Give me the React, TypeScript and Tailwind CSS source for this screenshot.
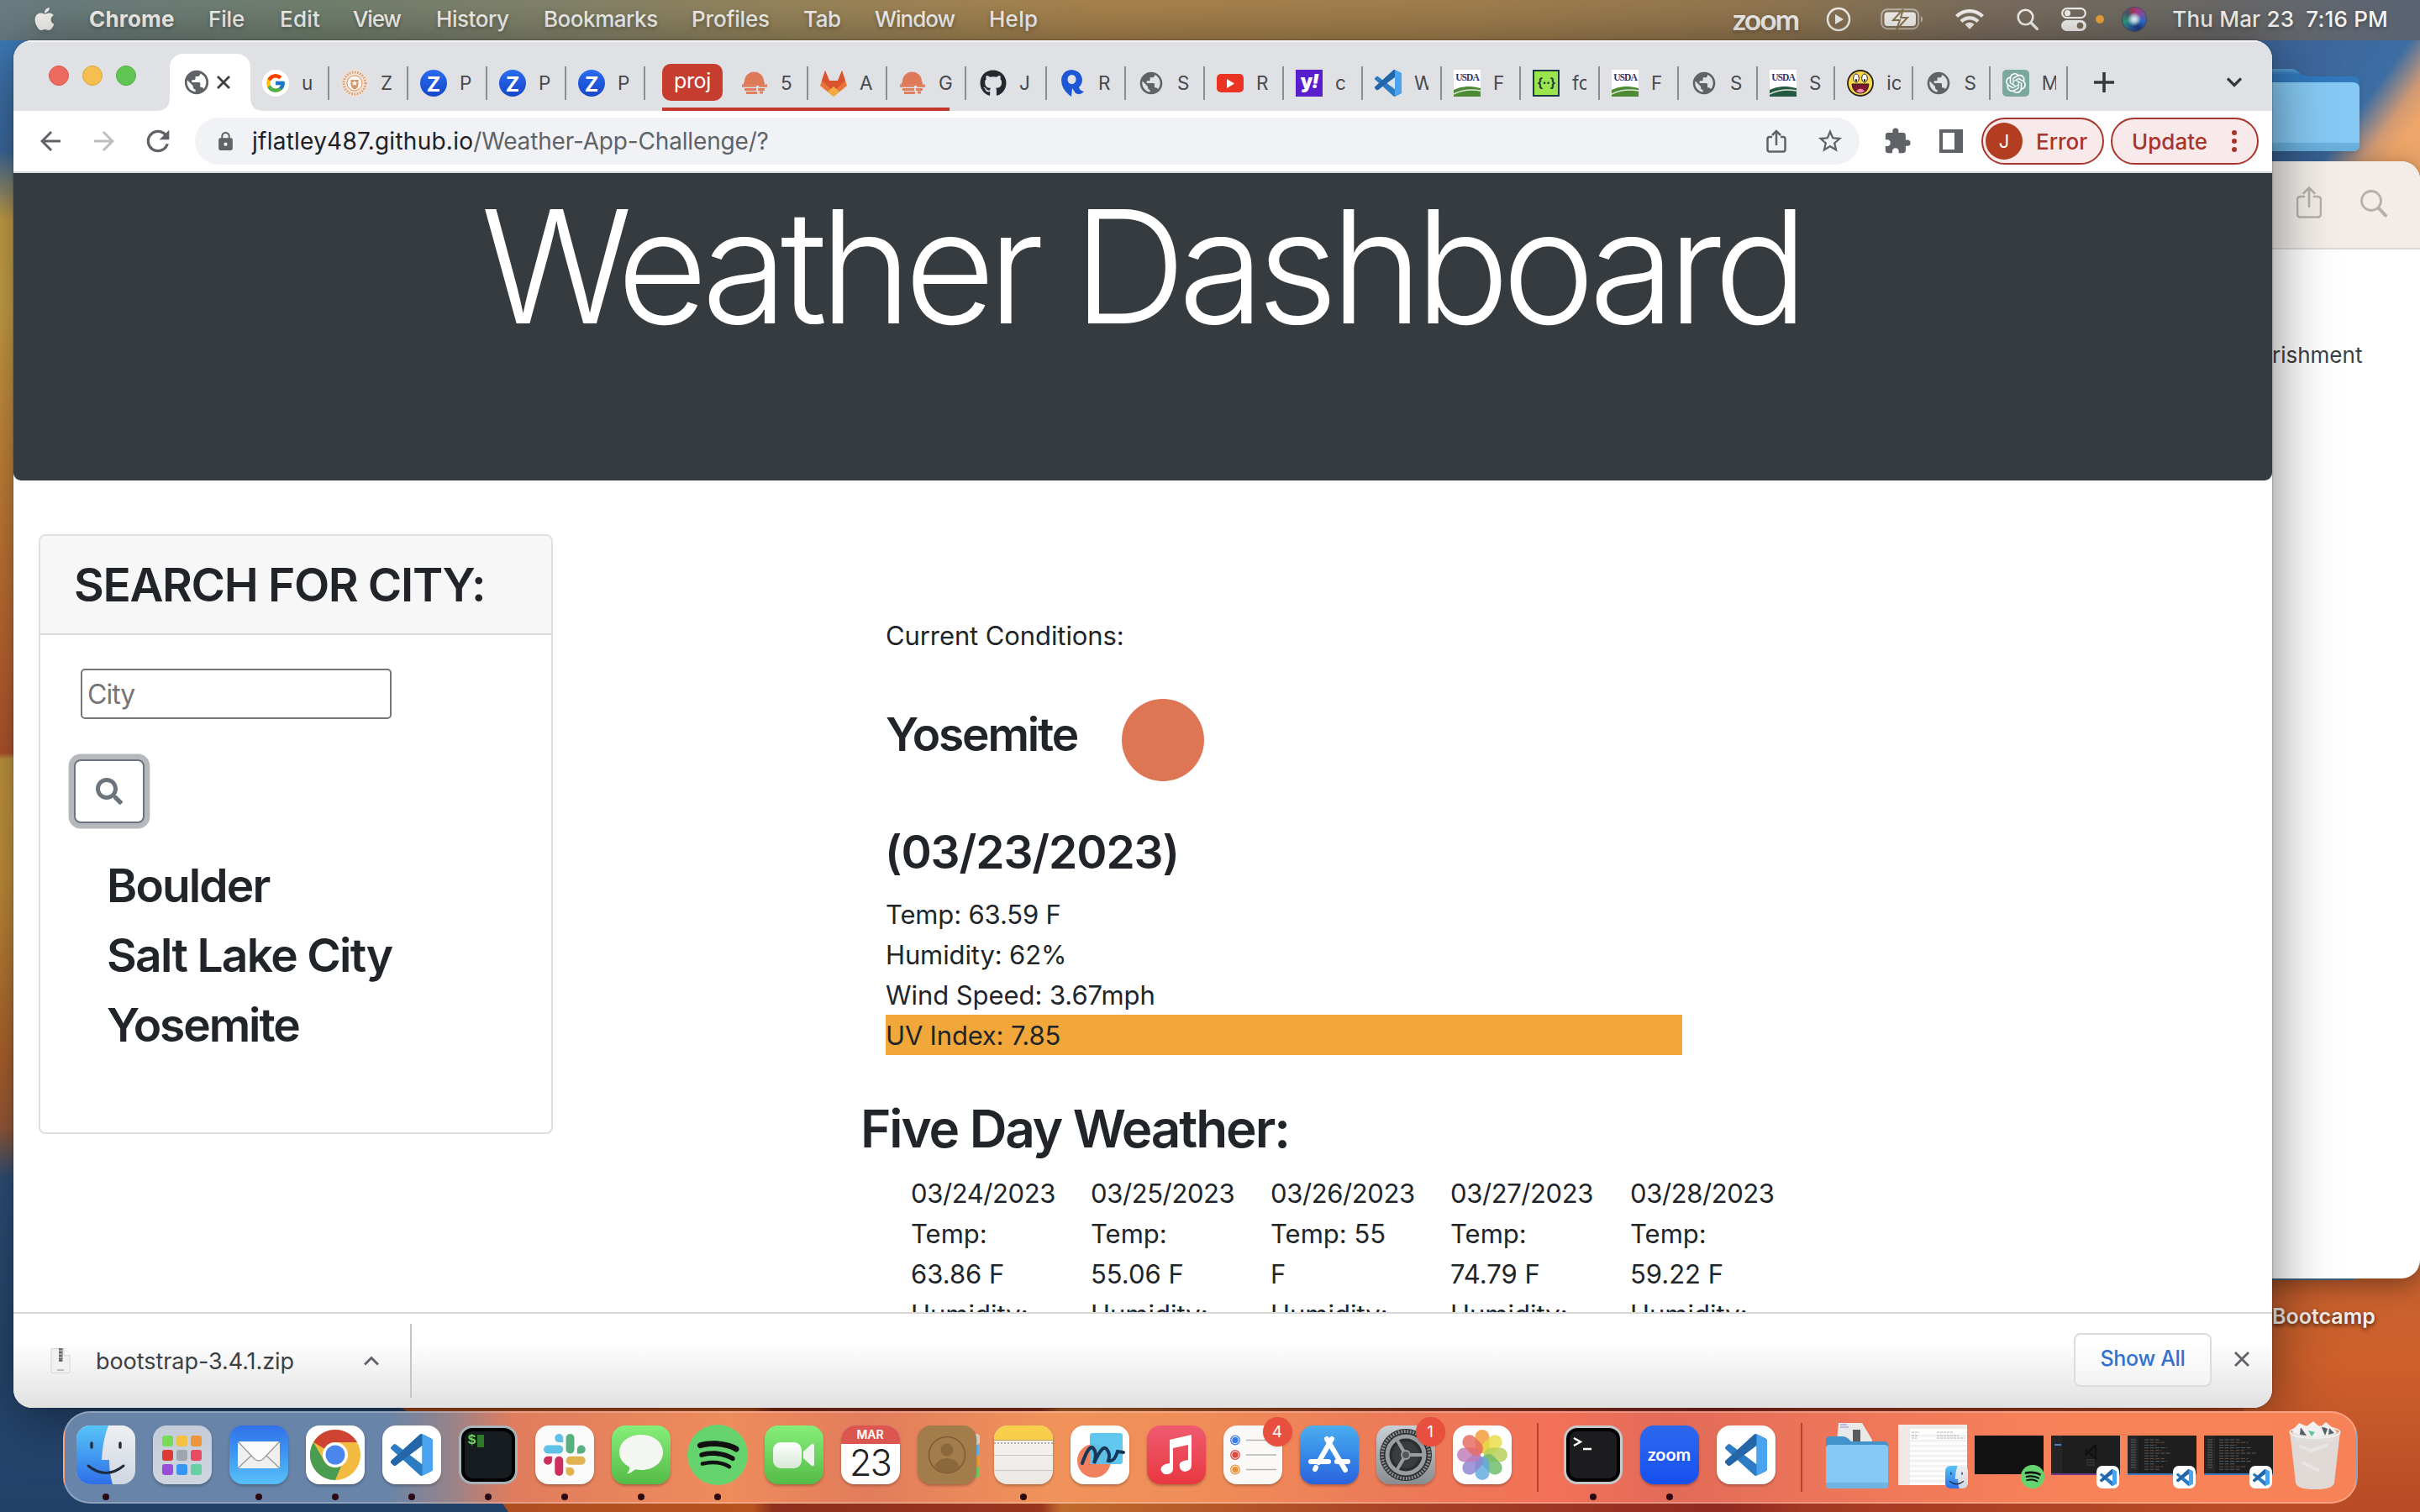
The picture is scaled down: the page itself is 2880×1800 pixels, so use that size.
import type { ReactNode } from "react";
import { FcGoogle } from "react-icons/fc";
import { FaApple, FaGithub, FaSearch, FaSpotify } from "react-icons/fa";
import { MdArrowBack, MdArrowForward, MdExtension, MdLock, MdPublic, MdRefresh, MdStarBorder } from "react-icons/md";

const VSCODE =
  "M23.15 2.587L18.21.21a1.494 1.494 0 0 0-1.705.29l-9.46 8.63-4.12-3.128a.999.999 0 0 0-1.276.057L.327 7.261A1 1 0 0 0 .326 8.74L3.899 12 .326 15.26a1 1 0 0 0 .001 1.479L1.65 17.94a.999.999 0 0 0 1.276.057l4.12-3.128 9.46 8.63a1.492 1.492 0 0 0 1.704.29l4.942-2.377A1.5 1.5 0 0 0 24 20.06V3.939a1.5 1.5 0 0 0-.85-1.352zm-5.146 14.861L10.826 12l7.178-5.448v10.896z";
const OPENAI =
  "M22.2819 9.8211a5.9847 5.9847 0 0 0-.5157-4.9108 6.0462 6.0462 0 0 0-6.5098-2.9A6.0651 6.0651 0 0 0 4.9807 4.1818a5.9847 5.9847 0 0 0-3.9977 2.9 6.0462 6.0462 0 0 0 .7427 7.0966 5.98 5.98 0 0 0 .511 4.9107 6.051 6.051 0 0 0 6.5146 2.9001A5.9847 5.9847 0 0 0 13.2599 24a6.0557 6.0557 0 0 0 5.7718-4.2058 5.9894 5.9894 0 0 0 3.9977-2.9001 6.0557 6.0557 0 0 0-.7475-7.0729zm-9.022 12.6081a4.4755 4.4755 0 0 1-2.8764-1.0408l.1419-.0804 4.7783-2.7582a.7948.7948 0 0 0 .3927-.6813v-6.7369l2.02 1.1686a.071.071 0 0 1 .038.052v5.5826a4.504 4.504 0 0 1-4.4945 4.4944zm-9.6607-4.1254a4.4708 4.4708 0 0 1-.5346-3.0137l.142.0852 4.783 2.7582a.7712.7712 0 0 0 .7806 0l5.8428-3.3685v2.3324a.0804.0804 0 0 1-.0332.0615L9.74 19.9502a4.4992 4.4992 0 0 1-6.1408-1.6464zM2.3408 7.8956a4.485 4.485 0 0 1 2.3655-1.9728V11.6a.7664.7664 0 0 0 .3879.6765l5.8144 3.3543-2.0201 1.1685a.0757.0757 0 0 1-.071 0l-4.8303-2.7865A4.504 4.504 0 0 1 2.3408 7.872zm16.5963 3.8558L13.1038 8.364 15.1192 7.2a.0757.0757 0 0 1 .071 0l4.8303 2.7913a4.4944 4.4944 0 0 1-.6765 8.1042v-5.6772a.79.79 0 0 0-.407-.667zm2.0107-3.0231l-.142-.0852-4.7735-2.7818a.7759.7759 0 0 0-.7854 0L9.409 9.2297V6.8974a.0662.0662 0 0 1 .0284-.0615l4.8303-2.7866a4.4992 4.4992 0 0 1 6.6802 4.66zM8.3065 12.863l-2.02-1.1638a.0804.0804 0 0 1-.038-.0567V6.0742a4.4992 4.4992 0 0 1 7.3757-3.4537l-.142.0805L8.704 5.459a.7948.7948 0 0 0-.3927.6813zm1.0976-2.3654l2.602-1.4998 2.6069 1.4998v2.9994l-2.5974 1.4997-2.6067-1.4997Z";

/* ---------- shared logos ---------- */

function CodeLogo({ className = "" }: { className?: string }) {
  return (
    <svg viewBox="0 0 24 24" className={className}>
      <path d={VSCODE} fill="#2c7cc4" />
      <path d="M3.900 12 .33 15.26a1 1 0 0 0 0 1.480l1.320 1.200a1 1 0 0 0 1.280.06L18 6.550V.15a1.500 1.500 0 0 0-1.500.350L7.050 9.130z" fill="#2566a8" />
      <path d="M18 .12 23.15 2.59A1.5 1.5 0 0 1 24 3.94v16.12a1.5 1.5 0 0 1-.85 1.35L18 23.9z" fill="#4aa3ee" />
    </svg>
  );
}

function FinderFace({ className = "" }: { className?: string }) {
  return (
    <svg viewBox="0 0 70 70" className={className}>
      <defs>
        <linearGradient id="fl" x1="0" y1="0" x2="0" y2="1">
          <stop offset="0" stopColor="#57c5f7" />
          <stop offset="1" stopColor="#2f6fe8" />
        </linearGradient>
        <linearGradient id="fr" x1="0" y1="0" x2="0" y2="1">
          <stop offset="0" stopColor="#eeeff2" />
          <stop offset="1" stopColor="#cfd7e2" />
        </linearGradient>
        <clipPath id="fc">
          <rect width="70" height="70" rx="16" />
        </clipPath>
      </defs>
      <g clipPath="url(#fc)">
        <rect width="70" height="70" fill="url(#fr)" />
        <path d="M0 0h38q-7 18-8 41h9q0 16 4 29H0z" fill="url(#fl)" />
      </g>
      <path d="M18 21v5M52 21v5" stroke="#1d2b3d" strokeWidth="3.4" strokeLinecap="round" />
      <path d="M14 48q21 17 42 0" fill="none" stroke="#1d2b3d" strokeWidth="3" strokeLinecap="round" />
    </svg>
  );
}

function Zoom({ className = "" }: { className?: string }) {
  return <span className={`font-['Lato'] leading-none ${className}`}>zoom</span>;
}

function Folder({ className = "" }: { className?: string }) {
  return (
    <svg viewBox="0 0 74 62" className={className} preserveAspectRatio="none">
      <path d="M0 5q0-5 5-5h15q4 0 7 3l3 3h39q5 0 5 5v20H0z" fill="#4292cb" />
      <path d="M0 14q0-4 4-4h66q4 0 4 4v43q0 5-5 5H5q-5 0-5-5z" fill="#86c9f4" />
      <path d="M0 55h74v2q0 5-5 5H5q-5 0-5-5z" fill="#6db4e2" />
    </svg>
  );
}

/* ---------- tab favicons ---------- */

const Globe = () => <MdPublic className="size-[34px] text-[#5f6368]" />;

const ZBadge = () => (
  <span className="flex size-8 items-center justify-center rounded-full bg-gradient-to-b from-[#2a6cf0] to-[#1746c8] font-['Lato'] text-[25px] leading-none font-black text-white">
    Z
  </span>
);

const Sunrise = () => (
  <svg viewBox="0 0 32 32" className="size-8">
    <path d="M3 19q-1-3 1-5a11.500 11.500 0 0 1 23 0q2 2 0 5z" fill="#df7a59" />
    <path d="M1 19.200h17M21 19.200h10M4 23.500h14M20 23.500h8M6 27.500h13M22 27h4" stroke="#df7f5f" strokeWidth="3.200" />
  </svg>
);

const Usda = ({ tone }: { tone: string }) => (
  <span className="flex h-8 w-8 flex-col justify-between overflow-hidden bg-white">
    <span className="text-center font-['Liberation_Serif'] text-[11.500px] leading-[19px] font-bold tracking-[-0.08em] text-[#2a3468]">USDA</span>
    <svg viewBox="0 0 32 12" className="h-3 w-8">
      <path d="M0 4Q14-3 32 2v10H0z" fill={tone} />
      <path d="M0 9Q14 2 32 5" stroke="#dfe9d8" strokeWidth="1.500" fill="none" />
    </svg>
  </span>
);

const Seal = () => (
  <svg viewBox="0 0 32 32" className="size-8">
    <circle cx="16" cy="16" r="16" fill="#f3e2d3" />
    <circle cx="16" cy="16" r="13" fill="none" stroke="#d4a07a" strokeWidth="3" strokeDasharray="1.600 1.600" />
    <circle cx="16" cy="16" r="9" fill="#fbf5ee" stroke="#cf9467" strokeWidth="1" />
    <path d="M11.500 12h9v5q0 5-4.500 6.500-4.500-1.500-4.500-6.500z" fill="#cf9a70" />
    <path d="m16 12.500 1 2.500h2.500l-2 1.500.8 2.500-2.300-1.500-2.300 1.500.8-2.500-2-1.500H15z" fill="#fff" />
  </svg>
);

const Gitlab = () => (
  <svg viewBox="0 0 32 32" className="size-8">
    <path d="M6 1 11 13h10l5-12 6 18-16 13L0 19z" fill="#e9743a" />
    <path d="M6 1 11 13h10l5-12 4 12-14 13L2 13z" fill="#d9532f" />
    <path d="m16 32-7-6 7-6 7 6z" fill="#f3aa40" />
  </svg>
);

const BlueR = () => (
  <svg viewBox="0 0 32 32" className="size-8">
    <path d="M15 32Q3 24 3 12 4 1 15 0q12 1 13 12 0 5-4 9 1 4 6 5-4 5-10 2l-4-6z" fill="#1d57d6" />
    <ellipse cx="15.500" cy="11.500" rx="5" ry="5.500" fill="#dfe1e5" />
  </svg>
);

const Awesome = () => (
  <svg viewBox="0 0 32 32" className="size-8">
    <circle cx="16" cy="16" r="15" fill="#f8d74c" stroke="#29241a" strokeWidth="1.800" />
    <ellipse cx="11" cy="10" rx="3.300" ry="5" fill="#fff" stroke="#29241a" />
    <ellipse cx="21" cy="10" rx="3.300" ry="5" fill="#fff" stroke="#29241a" />
    <path d="M10 12.500h2M20 12.500h2" stroke="#111" strokeWidth="2.500" />
    <path d="M6 17h20q-1 11-10 11T6 17z" fill="#7d1730" stroke="#29241a" />
    <path d="M11 25.500q5-6 10 0-5 4-10 0z" fill="#f08aa6" />
  </svg>
);

const YouTube = () => (
  <span className="flex h-[22px] w-8 items-center justify-center rounded-[5px] bg-[#ea3323]">
    <svg viewBox="0 0 10 12" className="h-[11px] w-[9px]">
      <path d="M0 0v12l10-6z" fill="#fff" />
    </svg>
  </span>
);

const favicons: Record<string, ReactNode> = {
  google: (
    <span className="flex size-8 items-center justify-center rounded-full bg-white">
      <FcGoogle className="size-[26px]" />
    </span>
  ),
  seal: <Seal />,
  z: <ZBadge />,
  sunrise: <Sunrise />,
  gitlab: <Gitlab />,
  github: <FaGithub className="size-8 text-[#24292f]" />,
  r: <BlueR />,
  globe: <Globe />,
  youtube: <YouTube />,
  yahoo: (
    <span className="flex size-8 items-center justify-center bg-[#5a1fcc] pb-1 font-['Inter'] text-[23px] leading-none font-black tracking-[-0.06em] text-white">
      y<i>!</i>
    </span>
  ),
  code: <CodeLogo className="size-8" />,
  usda: <Usda tone="#4d8a34" />,
  usda2: <Usda tone="#245a43" />,
  braces: (
    <span className="flex size-8 items-center justify-center border-2 border-[#1f3644] bg-[#9be54c] pb-0.5 font-['Inter'] text-[15px] leading-none font-bold tracking-[-0.04em] text-[#1f3644]">
      {"{··}"}
    </span>
  ),
  awesome: <Awesome />,
  openai: (
    <span className="flex size-8 items-center justify-center rounded-[5px] bg-[#7ba89d]">
      <svg viewBox="0 0 24 24" className="size-6">
        <path d={OPENAI} fill="#fff" />
      </svg>
    </span>
  ),
};

type TabInfo = { icon: string; label: string };
const pinned: TabInfo[] = [
  { icon: "google", label: "u" },
  { icon: "seal", label: "Z" },
  { icon: "z", label: "P" },
  { icon: "z", label: "P" },
  { icon: "z", label: "P" },
];
const grouped: TabInfo[] = [
  { icon: "sunrise", label: "5" },
  { icon: "gitlab", label: "A" },
  { icon: "sunrise", label: "G" },
];
const loose: TabInfo[] = [
  { icon: "github", label: "J" },
  { icon: "r", label: "R" },
  { icon: "globe", label: "S" },
  { icon: "youtube", label: "R" },
  { icon: "yahoo", label: "c" },
  { icon: "code", label: "W" },
  { icon: "usda", label: "F" },
  { icon: "braces", label: "fo" },
  { icon: "usda", label: "F" },
  { icon: "globe", label: "S" },
];
const tail: TabInfo[] = [
  { icon: "usda2", label: "S" },
  { icon: "awesome", label: "ic" },
  { icon: "globe", label: "S" },
  { icon: "openai", label: "M" },
];

function Tab({ icon, label, narrow = false }: TabInfo & { narrow?: boolean }) {
  return (
    <div className={`flex h-10 items-center border-r-2 border-[#8b8d91] pl-3.5 ${narrow ? "w-[92.250px]" : "w-[94px]"}`}>
      <span className="flex size-8 shrink-0 items-center justify-center">{favicons[icon]}</span>
      <span className="ml-[15px] w-[17px] overflow-hidden text-[22.500px] leading-8 whitespace-nowrap text-[#46494d]">{label}</span>
    </div>
  );
}

/* ---------- wallpaper ---------- */

function Wallpaper() {
  return (
    <svg viewBox="0 0 2880 1800" className="absolute inset-0 h-[1800px] w-[2880px]">
      <defs>
        <linearGradient id="left" x1="0" y1="0" x2="0" y2="1800" gradientUnits="userSpaceOnUse">
          <stop offset="0.027" stopColor="#3f7dbb" />
          <stop offset="0.1" stopColor="#3f6fa6" />
          <stop offset="0.145" stopColor="#d3a94c" />
          <stop offset="0.2" stopColor="#d7ad4e" />
          <stop offset="0.3" stopColor="#d38e3d" />
          <stop offset="0.42" stopColor="#cb7035" />
          <stop offset="0.498" stopColor="#bd592f" />
          <stop offset="0.502" stopColor="#d0a045" />
          <stop offset="0.58" stopColor="#d09a40" />
          <stop offset="0.7" stopColor="#b9692f" />
          <stop offset="0.745" stopColor="#a3603c" />
          <stop offset="0.78" stopColor="#30547f" />
          <stop offset="1" stopColor="#224169" />
        </linearGradient>
        <linearGradient id="right" x1="0" y1="1500" x2="0" y2="1800" gradientUnits="userSpaceOnUse">
          <stop offset="0" stopColor="#c4602f" />
          <stop offset="0.4" stopColor="#cf602b" />
          <stop offset="1" stopColor="#b84a25" />
        </linearGradient>
        <linearGradient id="sky" x1="2700" y1="-50" x2="2930" y2="117" gradientUnits="userSpaceOnUse">
          <stop offset="0.4" stopColor="#3d679c" />
          <stop offset="0.68" stopColor="#3c6da3" />
          <stop offset="0.82" stopColor="#d29a72" />
          <stop offset="0.9" stopColor="#eda569" />
        </linearGradient>
        <linearGradient id="floor" x1="430" y1="0" x2="2880" y2="0" gradientUnits="userSpaceOnUse">
          <stop offset="0" stopColor="#a94d1f" />
          <stop offset="0.19" stopColor="#b8521f" />
          <stop offset="0.2" stopColor="#8c2f1c" />
          <stop offset="0.33" stopColor="#98351f" />
          <stop offset="0.34" stopColor="#bf6a2c" />
          <stop offset="0.5" stopColor="#a84426" />
          <stop offset="0.66" stopColor="#8f2a20" />
          <stop offset="0.7" stopColor="#a33823" />
          <stop offset="0.92" stopColor="#bb4d26" />
        </linearGradient>
      </defs>
      <rect width="2880" height="1800" fill="url(#left)" />
      <rect x="2600" width="280" height="300" fill="url(#sky)" />
      <rect x="2600" y="1500" width="280" height="300" fill="url(#right)" />
      <path d="M450 1660h2220v140H605q-60-90-155-140z" fill="url(#floor)" />
    </svg>
  );
}

/* ---------- menu bar ---------- */

const menus: [string, string][] = [
  ["File", "w-[85px] tracking-[-0.005em]"],
  ["Edit", "w-[87px] tracking-[0.009em]"],
  ["View", "w-[99px] tracking-[-0.045em]"],
  ["History", "w-[128px] tracking-[-0.017em]"],
  ["Bookmarks", "w-[176px] tracking-[-0.018em]"],
  ["Profiles", "w-[133px] tracking-[-0.007em]"],
  ["Tab", "w-[85px] tracking-[-0.016em]"],
  ["Window", "w-[136px] tracking-[-0.040em]"],
  ["Help", "tracking-[0.010em]"],
];

function MenuBar() {
  return (
    <header className="relative flex h-12 items-center bg-[linear-gradient(90deg,#697c81_0%,#72806f_13%,#85846a_24%,#99855a_33%,#a8834d_46%,#a2804e_60%,#94784f_72%,#7b6e5e_82%,#6c6a68_91%,#596373_100%)] pb-[3px] text-[26px] font-medium whitespace-nowrap text-[#f4f3f0] [text-shadow:0_2px_5px_rgba(0,0,0,0.3)]">
      <FaApple className="ml-[38px] h-[31px] w-[30px] drop-shadow-md" />
      <span className="ml-[38px] w-[142px] font-bold tracking-[0.007em]">Chrome</span>
      {menus.map(([name, cls]) => (
        <span key={name} className={cls}>
          {name}
        </span>
      ))}
      <div className="ml-auto flex items-center">
        <Zoom className="mr-[33px] text-[35px] font-bold tracking-[-0.050em]" />
        <svg viewBox="0 0 30 30" className="mr-[35px] size-[30px]">
          <circle cx="15" cy="15" r="13" fill="none" stroke="#f4f3f0" strokeWidth="2.600" />
          <path d="M11 9v12l10-6z" fill="#f4f3f0" />
        </svg>
        <svg viewBox="0 0 52 26" className="mr-[36px] h-[26px] w-[52px]">
          <rect x="1.200" y="1.200" width="44" height="23" rx="7" fill="none" stroke="#f4f3f0" strokeOpacity=".55" strokeWidth="2" />
          <rect x="4.500" y="4.500" width="37.500" height="16.500" rx="4" fill="#f4f3f0" />
          <path d="M48 9q4 4 0 8z" fill="#f4f3f0" fillOpacity=".6" />
          <path d="M27 1 15 14h8l-4 11 13-14h-8z" fill="#f4f3f0" stroke="#8b7755" strokeWidth="2" />
        </svg>
        <svg viewBox="0 0 36 26" className="mr-[38px] h-[26px] w-9">
          <path d="M2.500 9.500a22 22 0 0 1 31 0M8 15.500a14 14 0 0 1 20 0" fill="none" stroke="#f4f3f0" strokeWidth="4.200" />
          <path d="m18 25 5.500-6a8 8 0 0 0-11 0z" fill="#f4f3f0" />
        </svg>
        <svg viewBox="0 0 26 26" className="mr-[27px] size-[26px]">
          <circle cx="10.500" cy="10.500" r="8.800" fill="none" stroke="#f4f3f0" strokeWidth="2.600" />
          <path d="m17 17 7.500 7.500" stroke="#f4f3f0" strokeWidth="3.200" strokeLinecap="round" />
        </svg>
        <svg viewBox="0 0 30 28" className="mr-[11px] h-7 w-[30px]">
          <rect x="1.200" y="1.200" width="27.600" height="11" rx="5.500" fill="none" stroke="#f4f3f0" strokeWidth="2.200" />
          <circle cx="7.500" cy="6.700" r="3.600" fill="#f4f3f0" />
          <rect y="15" width="30" height="13" rx="6.500" fill="#f4f3f0" />
          <circle cx="22.500" cy="21.500" r="3.800" fill="#7c6f60" />
        </svg>
        <span className="mr-[22px] size-2.5 rounded-full bg-[#f2a33c]" />
        <span className="mr-[31px] size-7 rounded-full bg-[radial-gradient(circle_at_50%_50%,#fff_0%,#bfe0f0_16%,transparent_42%),conic-gradient(#b0357a,#8c4fa0,#2f6fd8,#1d3c86,#2a5f9c,#2f9d84,#4a5a6a,#b0355a)] ring-1 ring-[#444c66]" />
        <span className="mr-[38px] tracking-[0.007em] whitespace-pre">Thu Mar 23  7:16 PM</span>
      </div>
    </header>
  );
}

/* ---------- window behind the browser and desktop items ---------- */

function Desktop() {
  return (
    <>
      <svg viewBox="0 0 208 98" className="absolute top-[82px] left-[2600px] h-[98px] w-[208px] drop-shadow-md">
        <defs>
          <linearGradient id="back" x1="0" y1="0" x2="0" y2="1">
            <stop offset="0" stopColor="#5a9fd0" />
            <stop offset="0.18" stopColor="#3079bd" />
          </linearGradient>
        </defs>
        <path d="M0 0h126q6 0 10 4t12 5h52q8 0 8 8v20H0z" fill="url(#back)" />
        <path d="M0 16h200q8 0 8 8v66q0 8-8 8H0z" fill="#86c9f4" />
        <path d="M0 88h208v2q0 8-8 8H0z" fill="#6db4e2" />
      </svg>
      <div className="absolute top-[1500px] left-[2680px] h-6 w-[126px] rounded-b-md bg-[#4a7ea3]" />
      <div className="absolute top-[192px] left-[2400px] flex h-[1330px] w-[480px] flex-col overflow-hidden rounded-[22px] bg-white shadow-[0_6px_30px_rgba(0,0,0,0.4)]">
        <div className="flex h-[105px] items-center justify-end gap-[46px] border-b-2 border-[#dcd8d5] bg-[#f2ede9] pr-[39px] pb-1.5">
          <svg viewBox="0 0 30 38" className="h-[38px] w-[30px]" fill="none" stroke="#b5b0ac" strokeWidth="2.600" strokeLinecap="round">
            <path d="M9 12H5q-4 0-4 4v16q0 4.500 4 4.500h20q4 0 4-4.500V16q0-4-4-4h-4M15 24V2M8.500 8 15 1.500 21.500 8" />
          </svg>
          <svg viewBox="0 0 32 33" className="mt-1 h-[33px] w-8" fill="none" stroke="#b5b0ac" strokeLinecap="round">
            <circle cx="13" cy="13" r="11.500" strokeWidth="2.800" />
            <path d="m22 22 8 8.500" strokeWidth="4" />
          </svg>
        </div>
        <span className="mt-[108px] ml-[304px] text-[26px] leading-9 text-[#3f3f3f]">rishment</span>
      </div>
      <span className="absolute top-[1549px] left-[2704px] text-[25px] leading-9 font-semibold text-[#f7ede8] [text-shadow:0_2px_5px_rgba(0,0,0,0.7)]">Bootcamp</span>
    </>
  );
}

/* ---------- browser ---------- */

function TabStrip() {
  return (
    <div className="flex h-[84px] shrink-0 items-start border-t-2 border-[#f3f3f5] bg-[#dfe1e5]">
      <div className="mt-[28px] ml-[42px] flex gap-4">
        <span className="size-6 rounded-full border border-[#d9564b] bg-[#ed6a5f]" />
        <span className="size-6 rounded-full border border-[#dba53f] bg-[#f5bf4f]" />
        <span className="size-6 rounded-full border border-[#4fae40] bg-[#61c554]" />
      </div>
      <div className="mt-3.5 ml-[24px] flex items-end">
        <svg viewBox="0 0 16 16" className="mt-[52px] size-4">
          <path d="M16 0v16H0Q16 16 16 0z" fill="#fff" />
        </svg>
        <div className="flex h-[68px] w-24 items-center rounded-t-[16px] bg-white pl-[15px]">
          <Globe />
          <svg viewBox="0 0 16 16" className="ml-[7px] size-4">
            <path d="m1 1 14 14M15 1 1 15" stroke="#3c4043" strokeWidth="2.800" />
          </svg>
        </div>
        <svg viewBox="0 0 16 16" className="-mr-4 size-4">
          <path d="M0 0v16h16Q0 16 0 0z" fill="#fff" />
        </svg>
      </div>
      <div className="mt-[29px] flex">
        {pinned.map((t, i) => (
          <Tab key={i} {...t} />
        ))}
      </div>
      <div className="relative mt-[26px] ml-5 flex h-14 w-[342px] shrink-0 items-start border-b-4 border-[#c5372c]">
        <span className="mr-2 flex h-11 w-[72px] shrink-0 items-center justify-center rounded-[10px] bg-[#c63d30] pb-0.5 text-[25px] tracking-[-0.015em] text-white">proj</span>
        <div className="mt-[3px] flex">
          {grouped.map((t, i) => (
            <Tab key={i} {...t} />
          ))}
        </div>
      </div>
      <div className="mt-[29px] ml-[22px] flex">
        {loose.map((t, i) => (
          <Tab key={i} {...t} />
        ))}
        {tail.map((t, i) => (
          <Tab key={i} {...t} narrow />
        ))}
      </div>
      <svg viewBox="0 0 24 24" className="mt-[36px] ml-[31px] size-6">
        <path d="M12 0v24M0 12h24" stroke="#34373b" strokeWidth="3.600" />
      </svg>
      <svg viewBox="0 0 18 12" className="mt-[42px] mr-9 ml-auto h-3 w-[18px]">
        <path d="m1 1.500 8 8 8-8" fill="none" stroke="#34373b" strokeWidth="3.200" />
      </svg>
    </div>
  );
}

function Toolbar() {
  return (
    <div className="flex h-[74px] shrink-0 items-center border-b-2 border-[#d9dbdd] bg-white text-[#5f6368]">
      <MdArrowBack className="ml-[26px] size-9 shrink-0" />
      <MdArrowForward className="ml-7 size-9 shrink-0 text-[#bcbec1]" />
      <MdRefresh className="ml-[26px] size-[40px] shrink-0" />
      <div className="ml-[24px] flex h-14 w-[1981px] items-center rounded-full bg-[#f0f2f5]">
        <MdLock className="ml-[24px] size-[25px]" />
        <span className="ml-[19px] text-[28px] tracking-[0.009em] text-[#202124]">jflatley487.github.io</span>
        <span className="text-[28px] tracking-[-0.0060em]">/Weather-App-Challenge/?</span>
        <svg viewBox="0 0 24 28" className="mr-[35px] ml-auto h-7 w-6" fill="none" stroke="#5f6368" strokeWidth="2.500">
          <path d="M7 9H4q-2.500 0-2.500 2.500v12.500q0 2.500 2.500 2.500h16q2.500 0 2.500-2.500V11.500Q22.500 9 20 9h-3M12 19V2M7 7l5-5 5 5" />
        </svg>
        <MdStarBorder className="mr-[18px] size-[34px]" />
      </div>
      <MdExtension className="ml-[28px] size-[34px]" />
      <span className="ml-[33px] h-7 w-7 border-[4px] border-r-[10px] border-[#5f6368]" />
      <div className="ml-[22px] flex h-14 w-[146px] items-center rounded-full border-[2.500px] border-[#a8352b] bg-[#f8eaea] text-[26px] font-medium text-[#a8352b]">
        <span className="ml-[3px] flex size-11 items-center justify-center rounded-full bg-[#b23d20] text-[22px] font-normal text-white">J</span>
        <span className="ml-[16px]">Error</span>
      </div>
      <div className="ml-2 flex h-14 w-44 items-center rounded-full border-[2.500px] border-[#a8352b] bg-[#f8eaea] text-[26px] font-medium text-[#a8352b]">
        <span className="ml-[23px]">Update</span>
        <span className="ml-[29px] flex flex-col gap-1">
          <i className="size-1.5 rounded-full bg-[#a8352b]" />
          <i className="size-1.5 rounded-full bg-[#a8352b]" />
          <i className="size-1.5 rounded-full bg-[#a8352b]" />
        </span>
      </div>
    </div>
  );
}

const days = [
  { date: "03/24/2023", temp: ["Temp:", "63.86 F"] },
  { date: "03/25/2023", temp: ["Temp:", "55.06 F"] },
  { date: "03/26/2023", temp: ["Temp: 55", "F"] },
  { date: "03/27/2023", temp: ["Temp:", "74.79 F"] },
  { date: "03/28/2023", temp: ["Temp:", "59.22 F"] },
];

function Line({ children, className = "" }: { children: ReactNode; className?: string }) {
  return <p className={`h-12 pt-px text-[31px] leading-[47px] whitespace-nowrap ${className}`}>{children}</p>;
}

function WeatherPage() {
  return (
    <main className="flex h-[1356px] shrink-0 flex-col overflow-hidden bg-white text-[#212529]">
      <div className="h-[366px] shrink-0 rounded-b-[9px] bg-[#363b3f]">
        <h1 className="pl-[556px] text-[187px] leading-[222px] font-light tracking-[-0.0490em] whitespace-nowrap text-white">Weather Dashboard</h1>
      </div>
      <div className="flex">
        <aside className="mt-16 ml-[30px] flex h-[714px] w-[612px] shrink-0 flex-col overflow-hidden rounded-[8px] border-2 border-[#dfdfdf] bg-white font-semibold">
          <h3 className="flex h-[118px] items-center border-b-2 border-[#dadada] bg-[#f7f7f7] pl-10 text-[55px] tracking-[-0.0245em]">SEARCH FOR CITY:</h3>
          <input
            className="mt-10 ml-12 h-[60px] w-[370px] rounded-[5px] border-2 border-[#767676] px-1.5 text-[32px] font-normal tracking-[-0.030em] placeholder:text-[#757575]"
            placeholder="City"
          />
          <button className="mt-[48px] ml-[40px] flex h-[76px] w-[84px] items-center justify-center rounded-[8px] border-2 border-[#6c757d] bg-white shadow-[0_0_0_6.400px_#b5b9bd]">
            <FaSearch className="size-8 text-[#6c757d]" />
          </button>
          <ul className="mt-[33px] ml-[79px] text-[55px] leading-[83.200px]">
            <li className="tracking-[-0.0340em]">Boulder</li>
            <li className="tracking-[-0.0305em]">Salt Lake City</li>
            <li className="tracking-[-0.0380em]">Yosemite</li>
          </ul>
        </aside>
        <section className="ml-[368px] w-[1100px]">
          <div className="ml-7 w-[948px] pt-[160px]">
            <Line className="tracking-[-0.003em]">Current Conditions:</Line>
            <div className="mt-[52px] flex h-[98px] items-center">
              <h3 className="mb-3.5 w-[281px] text-[55px] font-semibold tracking-[-0.0390em]">Yosemite</h3>
              <span className="size-[98px] rounded-full bg-[#de7656]" />
            </div>
            <h3 className="mt-[51px] -ml-px text-[55px] leading-[66px] font-semibold tracking-[-0.0200em]">(03/23/2023)</h3>
            <Line className="mt-[17px] tracking-[-0.005em]">Temp: 63.59 F</Line>
            <Line className="tracking-[-0.004em]">Humidity: 62%</Line>
            <Line className="tracking-[-0.002em]">Wind Speed: 3.67mph</Line>
            <Line className="bg-[#f2a73b] tracking-[-0.006em]">UV Index: 7.85</Line>
          </div>
          <h2 className="mt-[50px] -ml-0.5 text-[62px] leading-[76px] font-semibold tracking-[-0.0340em] whitespace-nowrap">Five Day Weather:</h2>
          <div className="mt-[14px] ml-[58px] flex">
            {days.map((d) => (
              <div key={d.date} className="w-[214px] shrink-0">
                <Line className="tracking-[-0.013em]">{d.date}</Line>
                <Line>{d.temp[0]}</Line>
                <Line>{d.temp[1]}</Line>
                <Line>Humidity:</Line>
              </div>
            ))}
          </div>
        </section>
      </div>
    </main>
  );
}

function DownloadShelf() {
  return (
    <footer className="flex h-[114px] items-center border-t-2 border-[#d8d8d9] bg-gradient-to-b from-white from-30% to-[#e1e1e1]">
      <svg viewBox="0 0 24 30" className="ml-11 h-[30px] w-6">
        <path d="M1 .5h15l7 8V28q0 1.500-1.500 1.500h-19Q1 29.500 1 28z" fill="#f1f1f1" stroke="#d6d6d6" />
        <path d="M16 .5v8h7" fill="#fff" stroke="#d6d6d6" />
        <rect x="10" width="4.500" height="16" fill="#6c6c6c" />
        <path d="M10 3h4M10 7h4M10 11h4" stroke="#ddd" strokeWidth="1" />
        <path d="M8 26h8" stroke="#aaa" strokeWidth="1.500" />
      </svg>
      <span className="ml-[30px] w-[319px] pt-0.5 text-[27px] tracking-[-0.002em] text-[#3c4043]">bootstrap-3.4.1.zip</span>
      <svg viewBox="0 0 18 12" className="-mt-px h-3 w-[18px]">
        <path d="m1 10.500 8-8 8 8" fill="none" stroke="#5f6368" strokeWidth="3" />
      </svg>
      <span className="ml-[37px] h-[88px] w-0.5 bg-[#c6c6c7]" />
      <span className="mb-0.5 ml-auto flex h-16 w-[164px] items-center justify-center rounded-[8px] border-2 border-[#dadce0] bg-white/40 pb-0.5 text-[25px] font-medium tracking-[-0.013em] text-[#3271cf]">
        Show All
      </span>
      <svg viewBox="0 0 18 18" className="mr-[27px] mb-1 ml-[27px] size-[18px]">
        <path d="m1 1 16 16M17 1 1 17" stroke="#5f6368" strokeWidth="2.800" />
      </svg>
    </footer>
  );
}

/* ---------- dock ---------- */

function Tile({ className = "", children }: { className?: string; children?: ReactNode }) {
  return <div className={`relative flex size-[70px] items-center justify-center overflow-hidden rounded-[16px] shadow-[0_2px_3px_rgba(0,0,0,0.25)] ${className}`}>{children}</div>;
}

const padColors = ["bg-[#78dc56]", "bg-[#f5c143]", "bg-[#ee9439]", "bg-[#dd3b33]", "bg-[#a0a5ad]", "bg-[#ea4b64]", "bg-[#9a4ddb]", "bg-[#3597f3]", "bg-[#66cfa4]"];

const Launchpad = () => (
  <Tile className="bg-gradient-to-b from-[#c3ccd8] to-[#cfd6e0]">
    <div className="grid grid-cols-3 gap-1">
      {padColors.map((c) => (
        <i key={c} className={`size-[13px] rounded-[3px] ${c}`} />
      ))}
    </div>
  </Tile>
);

const Mail = () => (
  <Tile className="bg-gradient-to-b from-[#3170ea] to-[#57bff8]">
    <svg viewBox="0 0 50 32" className="h-8 w-[50px]">
      <rect width="50" height="32" rx="3" fill="#efefef" />
      <path d="m1 31 17-16M49 31 32 15" stroke="#9a9a9a" strokeWidth="1.300" />
      <path d="m1 1 19 20q5 4 10 0L49 1" fill="#fafafa" stroke="#9a9a9a" strokeWidth="1.300" />
    </svg>
  </Tile>
);

const ChromeIcon = () => (
  <Tile className="bg-white">
    <svg viewBox="-32 -32 64 64" className="size-[64px]">
      <circle r="30" fill="#f3bb41" />
      <path d="M-26-15A30 30 0 0 1 26-15H0A15 15 0 0 0-13-7.500z" fill="#cf4332" />
      <path d="M-26-15 -13 7.500A15 15 0 0 0 7 13.500L0 30A30 30 0 0 1-26-15z" fill="#4a9d50" />
      <circle r="15" fill="#fff" />
      <circle r="11.500" fill="#4a86ee" />
    </svg>
  </Tile>
);

const CodeTile = () => (
  <Tile className="bg-white">
    <CodeLogo className="size-[50px]" />
  </Tile>
);

const ITerm = () => (
  <Tile className="border-[3px] border-[#a9b3ba] bg-[#151b1f] shadow-[inset_0_0_0_4px_#000]">
    <span className="absolute top-1.5 left-2 font-['Liberation_Mono'] text-[17px] leading-none font-bold text-[#66d950]">$</span>
    <i className="absolute top-2 left-[19px] h-[15px] w-2 bg-[#2f7a28]" />
  </Tile>
);

const Slack = () => (
  <Tile className="bg-[#fafafa]">
    <svg viewBox="0 0 54 54" className="size-[50px]">
      <path fill="#5fc1e8" d="M19.712.133a5.381 5.381 0 0 0-5.376 5.387 5.381 5.381 0 0 0 5.376 5.386h5.376V5.520A5.381 5.381 0 0 0 19.712.133m0 14.365H5.376A5.381 5.381 0 0 0 0 19.884a5.381 5.381 0 0 0 5.376 5.387h14.336a5.381 5.381 0 0 0 5.376-5.387 5.381 5.381 0 0 0-5.376-5.386" />
      <path fill="#58b07f" d="M53.760 19.884a5.381 5.381 0 0 0-5.376-5.386 5.381 5.381 0 0 0-5.376 5.386v5.387h5.376a5.381 5.381 0 0 0 5.376-5.387m-14.336 0V5.520A5.381 5.381 0 0 0 34.048.133a5.381 5.381 0 0 0-5.376 5.387v14.364a5.381 5.381 0 0 0 5.376 5.387 5.381 5.381 0 0 0 5.376-5.387" />
      <path fill="#e1b250" d="M34.048 54a5.381 5.381 0 0 0 5.376-5.387 5.381 5.381 0 0 0-5.376-5.386h-5.376v5.386A5.381 5.381 0 0 0 34.048 54m0-14.365h14.336a5.381 5.381 0 0 0 5.376-5.386 5.381 5.381 0 0 0-5.376-5.387H34.048a5.381 5.381 0 0 0-5.376 5.387 5.381 5.381 0 0 0 5.376 5.386" />
      <path fill="#cc2f5c" d="M0 34.249a5.381 5.381 0 0 0 5.376 5.386 5.381 5.381 0 0 0 5.376-5.386v-5.387H5.376A5.381 5.381 0 0 0 0 34.249m14.336-.001v14.364A5.381 5.381 0 0 0 19.712 54a5.381 5.381 0 0 0 5.376-5.387V34.250a5.381 5.381 0 0 0-5.376-5.387 5.381 5.381 0 0 0-5.376 5.387" />
    </svg>
  </Tile>
);

const Messages = () => (
  <Tile className="bg-gradient-to-b from-[#86ef79] to-[#54bb47]">
    <svg viewBox="0 0 54 48" className="h-12 w-[54px]">
      <path d="M27 0c15 0 26 9 26 21S42 42 27 42q-4 0-7-.8-4 4-10 5.300 4-4 3-8Q1 32 1 21C1 9 12 0 27 0z" fill="#f3f6f1" />
    </svg>
  </Tile>
);

const Spotify = () => (
  <div className="flex size-[72px] items-center justify-center rounded-full bg-[radial-gradient(#111_60%,#65d46e_66%)]">
    <FaSpotify className="size-[72px] text-[#65d46e]" />
  </div>
);

const FaceTime = () => (
  <Tile className="bg-gradient-to-b from-[#86ef79] to-[#54bb47]">
    <div className="h-[31px] w-[34px] rounded-[9px] bg-gradient-to-b from-white to-[#d8e8d6]" />
    <svg viewBox="0 0 14 28" className="ml-0.5 h-7 w-3.5">
      <path d="M0 10 10 1q3-1 3 2v22q0 3-3 2L0 18z" fill="#eef5ec" />
    </svg>
  </Tile>
);

const Calendar = () => (
  <Tile className="flex-col bg-white">
    <span className="flex h-[22px] w-full shrink-0 items-center justify-center bg-[#dc5650] text-[14px] leading-none font-semibold text-white">MAR</span>
    <span className="flex-1 text-[43px] leading-[44px] font-light tracking-[-0.040em] text-[#222]">23</span>
  </Tile>
);

const Contacts = () => (
  <div className="relative flex items-center">
    <div className="absolute top-2.5 right-[-4px] flex flex-col">
      <i className="h-[13px] w-3 rounded-r bg-[#d5d2cc]" />
      <i className="h-[13px] w-3 rounded-r bg-[#62b4e6]" />
      <i className="h-[13px] w-3 rounded-r bg-[#ee9a3c]" />
      <i className="h-[13px] w-3 rounded-r bg-[#6fcb62]" />
    </div>
    <Tile className="bg-[#a37c4b]">
      <svg viewBox="0 0 46 46" className="size-[46px]">
        <circle cx="23" cy="23" r="21.500" fill="none" stroke="#7d5c34" strokeWidth="1.600" />
        <circle cx="23" cy="17" r="7.500" fill="#8a683c" />
        <path d="M8 37q4-10 15-10t15 10q-6 7-15 7T8 37z" fill="#8a683c" />
      </svg>
    </Tile>
  </div>
);

const Notes = () => (
  <Tile className="bg-gradient-to-b from-[#f7f6f4] to-[#ebe8e4]">
    <div className="flex h-full w-full flex-col">
      <i className="h-[18px] w-full shrink-0 border-b border-[#b9a25a] bg-[#f8cf4a]" />
      <i className="mt-0.5 w-full border-t-2 border-dotted border-[#b5b2ad]" />
      <i className="mt-[13px] h-px w-full shrink-0 bg-[#c9c7c3]" />
      <i className="mt-[17px] h-px w-full shrink-0 bg-[#c9c7c3]" />
    </div>
  </Tile>
);

const Freeform = () => (
  <Tile className="bg-white">
    <svg viewBox="0 0 70 70" className="size-[70px]">
      <circle cx="28" cy="42" r="20" fill="#f0805e" />
      <rect x="23" y="9" width="39" height="37" rx="3" fill="#53c3ee" fillOpacity=".92" />
      <path d="M14 45Q22 22 27 27T28 45Q38 22 43 28T45 42Q52 44 56 31L63 32" fill="none" stroke="#15375a" strokeWidth="4" strokeLinecap="round" />
    </svg>
  </Tile>
);

const Music = () => (
  <Tile className="bg-gradient-to-b from-[#ee5a70] to-[#e8363f]">
    <svg viewBox="0 0 40 48" className="h-12 w-10">
      <path d="M12 6 38 0v36q0 6-6 7.500T24 39t5-8l5-1V12L16 16v24q0 6-6 7t-8-4 5-8l5-1z" fill="#fff" />
    </svg>
  </Tile>
);

const Badge = ({ n }: { n: string }) => (
  <span className="absolute -top-[10px] -right-[12px] flex size-[35px] items-center justify-center rounded-full bg-[#e94f3e] text-[19px] leading-none text-white shadow-sm">{n}</span>
);

const Reminders = () => (
  <div className="relative">
    <Tile className="bg-[#faf9f7]">
      <svg viewBox="0 0 70 70" className="size-[70px]">
        {["#3b7de8", "#dd4a40", "#e8953a"].map((c, i) => (
          <g key={c}>
            <circle cx="14" cy={17.5 + i * 17.5} r="5.300" fill="#fff" stroke={c} strokeWidth="1.300" />
            <circle cx="14" cy={17.5 + i * 17.5} r="3.700" fill={c} />
            <path d={`M27 ${17.5 + i * 17.5}h36`} stroke="#b5b4b2" strokeWidth="1.400" />
          </g>
        ))}
      </svg>
    </Tile>
    <Badge n="4" />
  </div>
);

const AppStore = () => (
  <Tile className="bg-gradient-to-b from-[#4badee] to-[#2a62de]">
    <svg viewBox="0 0 70 70" className="size-[70px]" stroke="#fff" strokeWidth="6" strokeLinecap="round">
      <path d="M38 16 22 44M32 16l22 37M13 43h21M44 43h13M18 52l1-2" />
    </svg>
  </Tile>
);

const Settings = () => (
  <div className="relative">
    <Tile className="bg-gradient-to-b from-[#c9d0d5] to-[#8a8d90]">
      <svg viewBox="-35 -35 70 70" className="size-[70px]" fill="none">
        <circle r="31" fill="#2b2d2f" />
        <circle r="28" stroke="#8b8e91" strokeWidth="4" strokeDasharray="2 1.500" />
        <circle r="22" stroke="#9a9da0" strokeWidth="5" />
        <circle r="16" fill="#3a3c3e" />
        <path d="M0 0 20 0M0 0-10-17M0 0-10 17" stroke="#9a9da0" strokeWidth="4" />
        <circle r="5" fill="#55585b" stroke="#9a9da0" strokeWidth="2" />
      </svg>
    </Tile>
    <Badge n="1" />
  </div>
);

const petals = ["#f19a37", "#e8dc43", "#b3d057", "#6cbb6a", "#62a9de", "#8b84cf", "#c07ab8", "#e5695f"];
const Photos = () => (
  <Tile className="bg-white">
    <svg viewBox="-35 -35 70 70" className="size-[70px]">
      {petals.map((c, i) => (
        <rect key={c} x="-8.500" y="-30" width="17" height="28" rx="8.500" fill={c} fillOpacity=".82" transform={`rotate(${i * 45})`} />
      ))}
    </svg>
  </Tile>
);

const Terminal = () => (
  <Tile className="border-[3px] border-[#c5c8ca] bg-[#1d1d1f] shadow-[inset_0_0_0_4px_#000]">
    <svg viewBox="0 0 64 64" className="size-16" fill="none" stroke="#fff" strokeWidth="2.400">
      <path d="m9 12 8 4.500-8 4.500M20 25h10" />
    </svg>
  </Tile>
);

const ZoomTile = () => (
  <Tile className="bg-gradient-to-b from-[#2e68ee] to-[#1550f0]">
    <Zoom className="pb-1 text-[21px] font-bold text-white" />
  </Tile>
);

const dockApps: [ReactNode, boolean][] = [
  [<FinderFace className="size-[70px]" />, true],
  [<Launchpad />, false],
  [<Mail />, true],
  [<ChromeIcon />, true],
  [<CodeTile />, true],
  [<ITerm />, true],
  [<Slack />, true],
  [<Messages />, true],
  [<Spotify />, true],
  [<FaceTime />, false],
  [<Calendar />, false],
  [<Contacts />, false],
  [<Notes />, true],
  [<Freeform />, false],
  [<Music />, false],
  [<Reminders />, false],
  [<AppStore />, false],
  [<Settings />, false],
  [<Photos />, false],
];
const recentApps: [ReactNode, boolean][] = [
  [<Terminal />, true],
  [<ZoomTile />, true],
  [<CodeTile />, false],
];

function DockItem({ icon, running }: { icon: ReactNode; running: boolean }) {
  return (
    <div className="relative flex h-full w-[91px] shrink-0 items-center justify-center pb-1.5">
      {icon}
      {running && <i className="absolute bottom-[2px] size-2 rounded-full bg-[#2b0a14]" />}
    </div>
  );
}

function CodeThumb({ variant }: { variant: "empty" | "left" | "full" }) {
  const widths = [22, 30, 18, 34, 26, 38, 20, 30, 34, 16, 28, 22];
  return (
    <svg viewBox="0 0 82 47" className="h-[47px] w-[82px]">
      <rect width="82" height="47" fill="#1e1e1e" />
      <rect width="13" height="47" fill="#262628" />
      <rect y="45" width="82" height="2" fill={variant === "empty" ? "#6d3a8c" : "#3c78c0"} />
      {variant === "empty" ? (
        <>
          <rect x="4" y="10" width="8" height="2" fill="#3b86c8" />
          <path d="m53 11-12 12m0-6 12 10V11" fill="none" stroke="#111" strokeWidth="2.500" />
          <path d="M42 29h10M42 32h10M42 35h10" stroke="#4d4d4d" strokeWidth=".8" />
        </>
      ) : (
        widths.map((w, i) => (
          <g key={i}>
            <path d={`M4 ${5 + i * 3}h6`} stroke="#6b6b6b" strokeWidth=".8" />
            <path d={`M${variant === "full" ? 18 : 20} ${5 + i * 3.2}h${variant === "full" ? w * 1.15 : w * 0.8}`} stroke={i % 3 === 1 ? "#7d5c48" : "#626e77"} strokeWidth=".8" strokeDasharray="5 1.500" />
          </g>
        ))
      )}
    </svg>
  );
}

function Thumb({ children, badge }: { children: ReactNode; badge: ReactNode }) {
  return (
    <div className="relative mr-[9px] flex h-[72px] w-[82px] shrink-0 items-center justify-center">
      {children}
      <div className="absolute -right-px -bottom-1">{badge}</div>
    </div>
  );
}

const MiniCode = () => (
  <span className="mr-0.5 flex size-[27px] items-center justify-center rounded-[7px] bg-white">
    <CodeLogo className="size-5" />
  </span>
);

function Dock() {
  return (
    <nav className="absolute top-[1680px] left-[75px] flex h-[110px] w-[2731px] items-center rounded-[32px] border-2 border-white/25 bg-[linear-gradient(90deg,#6884a8_0%,#6884a8_14%,#9a8388_17%,#e07c5d_19.500%,#ee8c5c_29%,#e27c5c_35%,#f0935a_43%,#f08c58_50%,#ec7a58_58%,#f27158_65%,#e26b59_70%,#ef785a_79%,#f88358_88%,#f88258_100%)] pl-[3px]">
      {dockApps.map(([icon, running], i) => (
        <DockItem key={i} icon={icon} running={running} />
      ))}
      <i className="mr-[19px] ml-[20px] h-[82px] w-0.5 shrink-0 bg-[#b8402e]" />
      {recentApps.map(([icon, running], i) => (
        <DockItem key={i} icon={icon} running={running} />
      ))}
      <i className="mr-[28px] ml-[20px] h-[82px] w-0.5 shrink-0 bg-[#b8402e]" />
      <div className="flex h-full items-center pb-1.5">
        <div className="relative mr-3 h-[80px] w-[74px] shrink-0">
          <svg viewBox="0 0 44 34" className="absolute top-0 left-3 h-[34px] w-11">
            <path d="M3 2h28l12 20v12H0z" fill="#e9e9ea" />
            <path d="M20 10h9v24h-9z" fill="#5b5b5e" />
            <path d="M5 4h8M5 7h10" stroke="#8f8fd8" />
          </svg>
          <Folder className="absolute bottom-0 left-0 h-[62px] w-[74px]" />
        </div>
        <Thumb badge={<FinderFace className="size-[27px]" />}>
          <svg viewBox="0 0 82 72" className="h-[72px] w-[82px]">
            <rect width="82" height="72" fill="#fdfdfd" />
            <rect width="14" height="72" fill="#efe8e4" />
            <rect width="82" height="5" fill="#f0ebe8" />
            {[12, 18, 24, 30, 36, 42, 48, 54, 60, 66].map((y) => (
              <rect key={y} x="14" y={y} width="68" height="2.500" fill="#f1f1f2" />
            ))}
            <path d="M16 9h9M16 13h7M16 16h6M46 9h20M46 13h26M46 16h34" stroke="#a9a9ad" strokeWidth=".9" strokeDasharray="3 1" />
          </svg>
        </Thumb>
        <Thumb
          badge={
            <span className="flex size-7 items-center justify-center rounded-full bg-[radial-gradient(#111_60%,#65d46e_66%)]">
              <FaSpotify className="size-7 text-[#65d46e]" />
            </span>
          }
        >
          <i className="h-[46px] w-[82px] bg-[#121212]" />
        </Thumb>
        <Thumb badge={<MiniCode />}>
          <CodeThumb variant="empty" />
        </Thumb>
        <Thumb badge={<MiniCode />}>
          <CodeThumb variant="left" />
        </Thumb>
        <Thumb badge={<MiniCode />}>
          <CodeThumb variant="full" />
        </Thumb>
        <svg viewBox="0 0 62 82" className="ml-2.5 h-[82px] w-[62px]">
          <path d="m4 12 8-9 9 4 8-6 8 7 7-6 13 11-5 12H8z" fill="#f1f0ee" />
          <path d="M1 13q30 14 60 0l-7 61q-1 8-23 8T8 74z" fill="#dedddc" fillOpacity=".95" />
          <path d="m14 8 7 10-8-1zM38 6l8 4-3 8zM48 9l6 6-7 2z" fill="#55606c" />
          <path d="m23 12 8 2-4 5z" fill="#5fc1a0" />
          <ellipse cx="31" cy="14" rx="30" ry="7" fill="none" stroke="#f4f2f0" strokeWidth="1.400" />
          <path d="m12 30 14 6 20-7M16 50l20 10" stroke="#e7e6e5" strokeWidth="4" fill="none" />
        </svg>
      </div>
    </nav>
  );
}

export default function App() {
  return (
    <div className="relative h-[1800px] w-[2880px] overflow-hidden font-['Inter',sans-serif]">
      <Wallpaper />
      <MenuBar />
      <Desktop />
      <div className="absolute top-12 left-4 flex h-[1628px] w-[2688px] flex-col overflow-hidden rounded-[22px] bg-white shadow-[0_10px_70px_rgba(0,0,0,0.5),0_0_2px_rgba(0,0,0,0.5)]">
        <TabStrip />
        <Toolbar />
        <WeatherPage />
        <DownloadShelf />
      </div>
      <Dock />
    </div>
  );
}
